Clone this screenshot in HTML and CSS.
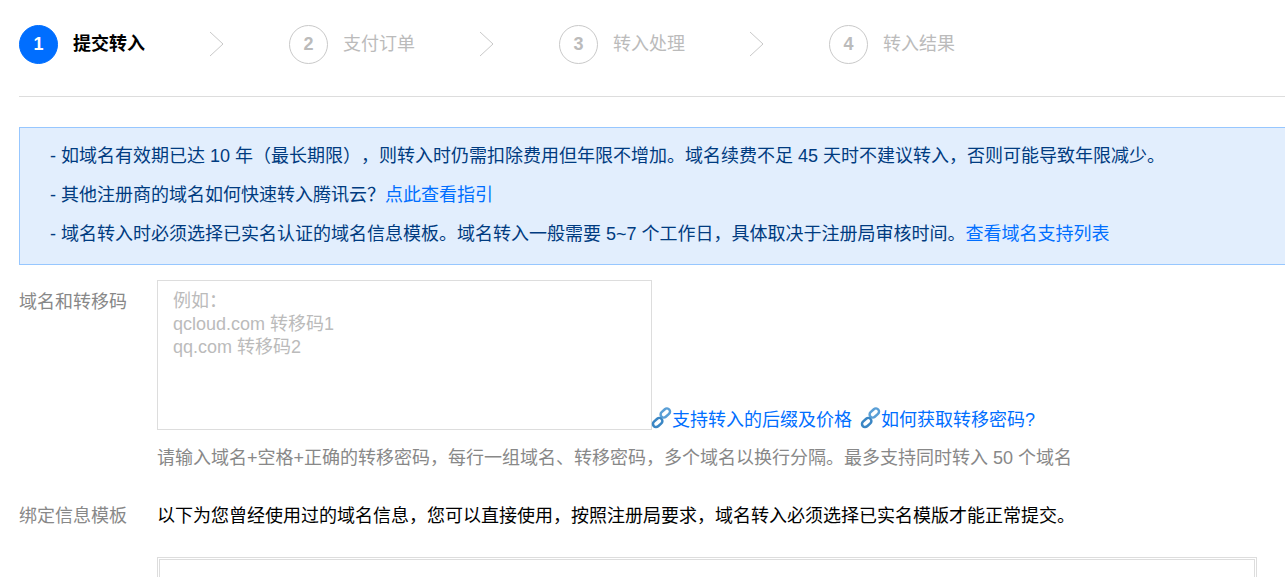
FILE: index.html
```html
<!DOCTYPE html>
<html lang="zh-CN">
<head>
<meta charset="utf-8">
<title>提交转入</title>
<link rel="stylesheet" href="styles.css">
</head>
<body>
<div class="page">
  <ol class="steps">
    <li class="step step-active"><span class="num">1</span><span class="step-text">提交转入</span><svg class="arrow" width="16" height="26" viewBox="0 0 16 26"><path d="M1 1 L14 13 L1 25" fill="none" stroke="#c9c9c9" stroke-width="1"/></svg></li>
    <li class="step"><span class="num">2</span><span class="step-text">支付订单</span><svg class="arrow" width="16" height="26" viewBox="0 0 16 26"><path d="M1 1 L14 13 L1 25" fill="none" stroke="#c9c9c9" stroke-width="1"/></svg></li>
    <li class="step"><span class="num">3</span><span class="step-text">转入处理</span><svg class="arrow" width="16" height="26" viewBox="0 0 16 26"><path d="M1 1 L14 13 L1 25" fill="none" stroke="#c9c9c9" stroke-width="1"/></svg></li>
    <li class="step"><span class="num">4</span><span class="step-text">转入结果</span></li>
  </ol>
  <div class="notice">
    <p>- 如域名有效期已达 10 年（最长期限），则转入时仍需扣除费用但年限不增加。域名续费不足 45 天时不建议转入，否则可能导致年限减少。</p>
    <p>- 其他注册商的域名如何快速转入腾讯云？<a href="#">点此查看指引</a></p>
    <p>- 域名转入时必须选择已实名认证的域名信息模板。域名转入一般需要 5~7 个工作日，具体取决于注册局审核时间。<a href="#">查看域名支持列表</a></p>
  </div>
  <div class="row row-code">
    <div class="label">域名和转移码</div>
    <div class="field">
      <div class="input-line">
        <textarea class="code" placeholder="例如：&#10;qcloud.com 转移码1&#10;qq.com 转移码2"></textarea>
        <a href="#" class="link"><svg class="chain" width="21" height="22" viewBox="0 0 22 22"><g fill="none" stroke-width="2.600"><rect x="9.500" y="2.500" width="11" height="6.500" rx="3.250" transform="rotate(-42 15 5.750)" stroke="#5a9fd6"/><rect x="1.500" y="12.500" width="11" height="6.500" rx="3.250" transform="rotate(-42 7 15.750)" stroke="#3a86c4"/></g></svg>支持转入的后缀及价格</a>
        <a href="#" class="link link-second"><svg class="chain" width="21" height="22" viewBox="0 0 22 22"><g fill="none" stroke-width="2.600"><rect x="9.500" y="2.500" width="11" height="6.500" rx="3.250" transform="rotate(-42 15 5.750)" stroke="#5a9fd6"/><rect x="1.500" y="12.500" width="11" height="6.500" rx="3.250" transform="rotate(-42 7 15.750)" stroke="#3a86c4"/></g></svg>如何获取转移密码?</a>
      </div>
      <p class="hint">请输入域名+空格+正确的转移密码，每行一组域名、转移密码，多个域名以换行分隔。最多支持同时转入 50 个域名</p>
    </div>
  </div>
  <div class="row row-template">
    <div class="label">绑定信息模板</div>
    <div class="field">
      <p class="desc">以下为您曾经使用过的域名信息，您可以直接使用，按照注册局要求，域名转入必须选择已实名模版才能正常提交。</p>
      <div class="table-frame"><div class="table-inner"></div></div>
    </div>
  </div>
</div>
</body>
</html>
```
FILE: styles.css
```css
* { box-sizing: border-box; }
html, body { margin: 0; padding: 0; height: 577px; overflow: hidden; background: #fff; }
body { font-family: "Liberation Sans", Arial, "Noto Sans CJK SC", sans-serif; font-size: 18px; color: #000; text-spacing-trim: space-all; }
.page { padding: 24px 0 0 19px; }
.steps { list-style: none; margin: 0; padding: 0 0 32px; display: flex; border-bottom: 1px solid #ddd; height: 73px; }
.step { display: flex; align-items: center; width: 270px; height: 40px; color: #bbb; }
.num { width: 39px; height: 39px; align-self: flex-end; border-radius: 50%; border: 1px solid #c9c9c9; display: flex; align-items: center; justify-content: center; font-size: 18px; font-weight: 700; }
.step-text { margin-left: 15px; width: 136px; line-height: 40px; }
.arrow { display: block; }
.step-active { color: #000; }
.step-active .num { background: #006eff; border-color: #006eff; color: #fff; }
.step-active .step-text { font-weight: 700; }
.notice { margin-top: 30px; height: 138px; width: 1266px; background: #e2eefd; border: 1px solid #97c7ff; border-right: 0; padding: 9px 0 0 30px; color: #003b80; }
.notice p { margin: 0; line-height: 39px; height: 39px; white-space: nowrap; }
a { color: #006eff; text-decoration: none; }
.row { display: flex; }
.row-code { margin-top: 15px; }
.label { width: 138px; flex: none; color: #888; line-height: 24px; padding-top: 10px; }
.input-line { display: flex; align-items: flex-end; height: 150px; }
.code { display: block; width: 495px; height: 150px; border: 1px solid #ddd; padding: 9px 15px; margin: 0; font: 18px/23px "Liberation Sans", Arial, "Noto Sans CJK SC", sans-serif; resize: none; outline: 0; background: #fff; }
.code::placeholder { color: #bbb; opacity: 1; }
.link { display: flex; align-items: center; height: 24px; margin-left: -1px; white-space: nowrap; }
.link-second { margin-left: 8px; }
.chain { flex: none; }
.hint { margin: 16px 0 0; line-height: 24px; color: #888; white-space: nowrap; }
.row-template { margin-top: 34px; }
.row-template .label { padding-top: 0; }
.desc { margin: 0; line-height: 24px; white-space: nowrap; }
.table-frame { margin-top: 29px; width: 1100px; height: 40px; border: 1px solid #ddd; border-bottom: 0; padding: 1px 1px 0; }
.table-inner { height: 100%; border: 1px solid #ddd; border-bottom: 0; }
```
